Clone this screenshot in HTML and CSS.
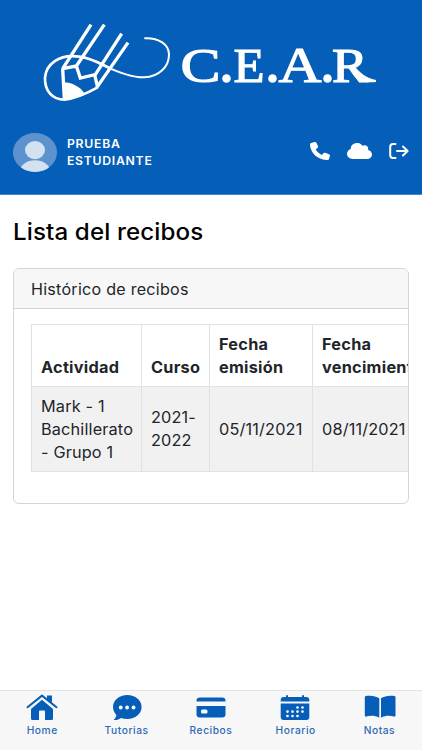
FILE: index.html
```html
<!DOCTYPE html>
<html lang="es">
<head>
<meta charset="utf-8">
<title>Lista del recibos</title>
<link rel="stylesheet" href="styles.css">
</head>
<body>
<header class="header">
  <div class="brand">
    <svg class="pencil" viewBox="0 0 450 285" fill="none" stroke="#fff">
      <path stroke-width="10" d="M183 29 98 161M223 29 139 153M275 56 194 182M294 83 200 218M98 161 139 153 151 189 194 179 203 218M98 160 103 250"/>
      <path stroke-width="8" d="M245 162C215 149 190 131 148 125C86 116 48 148 45 188C44 228 67 254 103 254C138 250 178 231 203 217"/>
      <path stroke-width="6" d="M220 151C273 176 310 188 343 187C387 185 417 155 417 119C417 88 387 68 343 70"/>
      <path stroke="none" fill="#fff" d="M100 202C126 202 151 216 163 235C140 246 122 252 102 254Z"/>
    </svg>
    <svg class="wordmark" viewBox="0 0 220 70" fill="#fff">
      <g font-family="Liberation Serif, serif" font-size="48" stroke="#fff" stroke-width="1.2">
        <text x="10.500" y="51.500" textLength="40" lengthAdjust="spacingAndGlyphs">C</text>
        <text x="63.500" y="51.500" textLength="31" lengthAdjust="spacingAndGlyphs">E</text>
        <text x="108.500" y="51.500" font-size="51" textLength="43" lengthAdjust="spacingAndGlyphs">A</text>
        <text x="162" y="51.500" textLength="36" lengthAdjust="spacingAndGlyphs">R</text>
      </g>
      <circle cx="56.500" cy="48.500" r="4.300"/><circle cx="102.500" cy="48.500" r="4.300"/><circle cx="157.500" cy="48.500" r="4.300"/>
      <path d="M177 36h7c6 6 11 12 22 14v2c-12 1-18-1-22-6Z"/>
    </svg>
  </div>
  <div class="userbar">
    <svg class="avatar" viewBox="0 0 44 40" preserveAspectRatio="none">
      <defs><clipPath id="face"><ellipse cx="22" cy="20" rx="22" ry="20"/></clipPath></defs>
      <g clip-path="url(#face)"><path fill="#5c93cf" d="M0 0h44v40H0z"/><ellipse cx="22" cy="17.500" rx="10" ry="9.300" fill="#d3e1f1"/><ellipse cx="22" cy="39" rx="15" ry="11" fill="#d3e1f1"/></g>
    </svg>
    <div class="username">PRUEBA<br>ESTUDIANTE</div>
    <nav class="actions">
      <svg width="20" height="18" viewBox="0 0 512 512" preserveAspectRatio="none" fill="#fff"><path d="M165 25c-8-19-29-29-48-23L29 26C12 30 0 46 0 64c0 247 201 448 448 448 18 0 34-12 38-29l24-88c6-20-4-41-23-49l-96-40c-17-7-36-2-47 12l-40 49C234 334 178 278 145 208l49-40c14-11 19-31 12-47l-41-96Z"/></svg>
      <svg width="25" height="16" viewBox="0 32 640 448" preserveAspectRatio="none" fill="#fff"><path d="M0 336c0 80 64 144 144 144h368c71 0 128-57 128-128 0-62-44-114-102-125 15-40 2-131-90-131-20 0-38 6-53 16A160 160 0 0 0 96 200C40 220 0 273 0 336Z"/></svg>
      <svg width="20" height="16" viewBox="0 0 20 16" fill="none" stroke="#fff" stroke-width="2" stroke-linecap="round" stroke-linejoin="round"><path d="M6.500 1.100H4Q1.200 1.100 1.200 4v8Q1.200 14.900 4 14.900h2.500M8 8h10.500M14 3.500 18.600 8 14 12.500"/></svg>
    </nav>
  </div>
</header>
<main class="content">
  <h1 class="title">Lista del recibos</h1>
  <section class="card">
    <div class="card-header"><span class="wide">Histórico de recibos</span></div>
    <div class="card-body">
      <table class="table">
        <colgroup><col class="c-act"><col class="c-cur"><col class="c-emi"><col class="c-ven"></colgroup>
        <thead><tr><th><span class="wide">Actividad</span></th><th><span class="wide">Curso</span></th><th><span class="wide">Fecha<br>emisión</span></th><th><span class="wide">Fecha<br>vencimiento</span></th></tr></thead>
        <tbody><tr><td><span class="wide">Mark - 1<br>Bachillerato<br>- Grupo 1</span></td><td><span class="wide">2021-<br>2022</span></td><td><span class="wide">05/11/2021</span></td><td><span class="wide">08/11/2021</span></td></tr></tbody>
      </table>
    </div>
  </section>
</main>
<nav class="tabs">
  <a class="tab"><svg width="32" height="27" viewBox="0 0 32 27"><path fill="#075eb8" d="M16 5.800 27 15v9.500q0 1.500-1.500 1.500H19v-8.500q0-1-1-1h-4q-1 0-1 1V26H6.500Q5 26 5 24.500V15Z"/><path fill="#075eb8" d="M21 1.500h5V9l-5-4Z"/><path fill="none" stroke="#075eb8" stroke-width="2" stroke-linecap="round" stroke-linejoin="round" d="M1.500 13.200 16 1.600l14.500 11.600"/></svg><span>Home</span></a>
  <a class="tab"><svg width="32" height="27" viewBox="0 0 32 27"><path fill="#075eb8" d="M16.300 1C8.300 1 2 6.300 2 13c0 3 1.300 5.700 3.400 7.900-.2 1.700-1 3.200-2.200 4.300-.5.500-.2 1 .5.900 2.500-.1 4.700-1 6.300-2.200 2 .7 4 1.100 6.300 1.100 8 0 14.300-5.300 14.300-12S24.300 1 16.300 1Z"/><g fill="#fff"><circle cx="9.700" cy="13.500" r="1.900"/><circle cx="16.100" cy="13.500" r="1.900"/><circle cx="22.500" cy="13.500" r="1.900"/></g></svg><span>Tutorias</span></a>
  <a class="tab"><svg width="32" height="27" viewBox="0 0 32 27"><path fill="#075eb8" d="M5 3.500h22q3.500 0 3.500 3v1h-29v-1q0-3 3.500-3ZM1.500 12h29v8.500q0 3-3.500 3H5q-3.500 0-3.500-3Z"/><rect x="6" y="15.500" width="6.500" height="4" rx="1.500" fill="#fff"/></svg><span>Recibos</span></a>
  <a class="tab"><svg width="32" height="27" viewBox="0 0 32 27"><path fill="#075eb8" d="M1.700 7.500V6q0-3 3-3H7V2q0-1 1-1t1 1v1h14V2q0-1 1-1t1 1v1h2.300q3 0 3 3v1.500ZM1.700 9.500h28.600V23q0 3-3 3H4.700q-3 0-3-3Z"/><path stroke="#fff" stroke-width="2.700" stroke-linecap="round" stroke-dasharray="0 5" d="M18.500 13.500h5.100M8.500 17.600h15.100M8.500 22h10.100"/></svg><span>Horario</span></a>
  <a class="tab"><svg width="32" height="27" viewBox="0 0 32 27"><path fill="#075eb8" d="M15.300 4.300v19.500C11 21.500 6.500 21.400 2 22.600Q.8 22.800.8 21.500V3.200q0-.9.900-1.100C7 1 11.700 2 15.300 4.300ZM17 4.300v19.500c4.300-2.300 8.500-2.400 13-1.200 1 .2 1.500-.2 1.500-1.100V3.200q0-.9-.9-1.100C25.300 1 20.600 2 17 4.300Z"/></svg><span>Notas</span></a>
</nav>
</body>
</html>
```
FILE: styles.css
```css
* { box-sizing: border-box; }
body {
  margin: 0;
  height: 750px;
  display: flex;
  flex-direction: column;
  overflow: hidden;
  background: #fff;
  color: #212529;
  font-family: Inter, "Liberation Sans", sans-serif;
}
.header { height: 195px; background: #055eb7; border-bottom: 1px solid #4288cc; flex: none; }
.brand { display: flex; padding: 15px 0 0 30px; height: 132px; }
.pencil { width: 150px; height: 95px; flex: none; }
.wordmark { width: 220px; height: 70px; margin: 15px 0 0 -10px; flex: none; }
.userbar { display: flex; align-items: center; height: 40px; padding: 0 13px 0 12.5px; }
.avatar { width: 44px; height: 39px; }
.username { margin-left: 10.5px; color: #fff; font-size: 12px; font-weight: 600; line-height: 17px; letter-spacing: .7px; transform: scaleX(1.02); transform-origin: left; }
.actions { display: flex; align-items: center; margin: -3px 0 0 auto; gap: 17px; }
.content { flex: 1; padding: 20px 13px 0; }
.title { margin: 0; height: 33px; line-height: 34px; font-size: 23px; font-weight: 500; color: #000; letter-spacing: .1px; white-space: nowrap; transform: scaleX(1.05); transform-origin: left; }
.wide { display: inline-block; transform: scaleX(1.05); transform-origin: left; }
.card { height: 236px; margin-top: 20px; border: 1px solid #d5d5d6; border-radius: 6px; overflow: hidden; }
.card-header { height: 40px; padding-left: 17px; line-height: 41px; font-size: 15.3px; letter-spacing: .25px; background: #f7f7f7; border-bottom: 1px solid #d5d5d6; }
.card-body { padding: 15px 0 0 17px; overflow: hidden; }
.table { width: 397px; table-layout: fixed; border-collapse: collapse; font-size: 15.5px; line-height: 23px; letter-spacing: .15px; }
.table th, .table td { border: 1px solid #dee2e6; padding: 0 0 0 8.5px; text-align: left; white-space: nowrap; }
.table th { height: 62px; padding-bottom: 7px; vertical-align: bottom; font-weight: 700; letter-spacing: .25px; }
.table td { height: 85px; background: #f1f1f2; vertical-align: middle; }
.table th .wide, .table td .wide { vertical-align: top; }
.c-act { width: 110px; }
.c-cur { width: 68px; }
.c-emi { width: 103px; }
.c-ven { width: 116px; }
.tabs { display: flex; flex: none; height: 60px; background: #f7f7f7; border-top: 1px solid #e2e2e2; }
.tab { flex: 1; display: flex; flex-direction: column; align-items: center; padding-top: 3px; color: #2c68b4; font-size: 10px; font-weight: 500; line-height: 14px; letter-spacing: .55px; }
.tab span { margin-top: 2px; transform: scaleX(1.02); }
```
